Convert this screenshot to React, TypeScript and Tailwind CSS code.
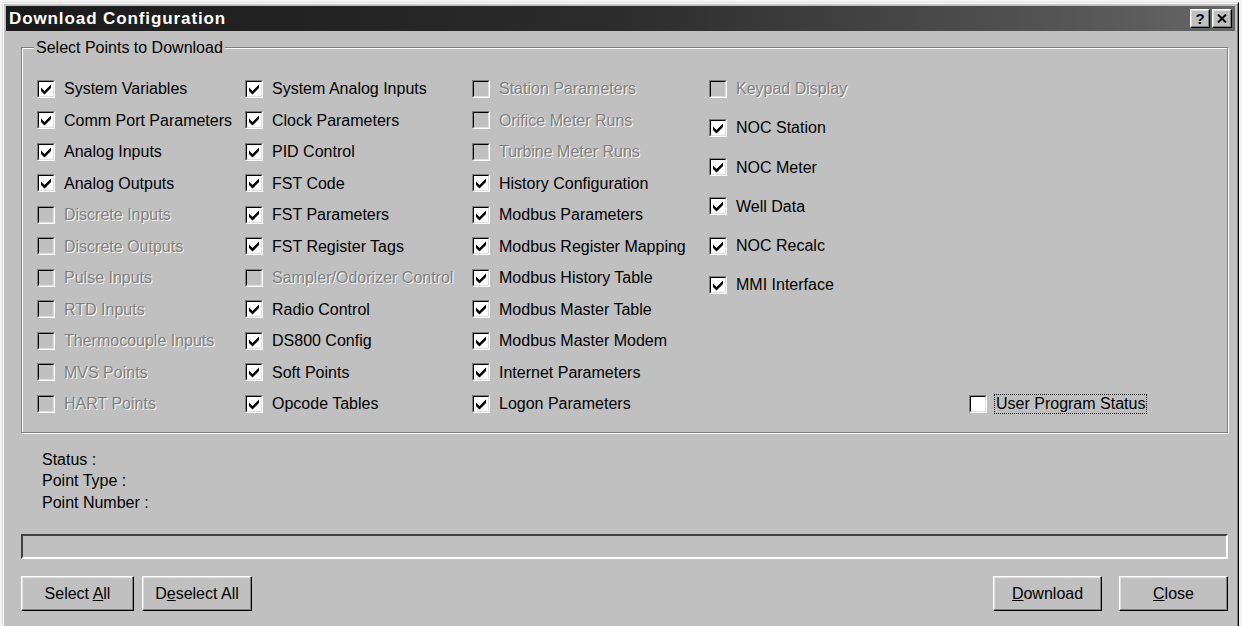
import type { ReactNode } from "react";

type Point = { label: string; checked?: boolean; disabled?: boolean };

const col1: Point[] = [
  { label: "System Variables", checked: true },
  { label: "Comm Port Parameters", checked: true },
  { label: "Analog Inputs", checked: true },
  { label: "Analog Outputs", checked: true },
  { label: "Discrete Inputs", disabled: true },
  { label: "Discrete Outputs", disabled: true },
  { label: "Pulse Inputs", disabled: true },
  { label: "RTD Inputs", disabled: true },
  { label: "Thermocouple Inputs", disabled: true },
  { label: "MVS Points", disabled: true },
  { label: "HART Points", disabled: true },
];

const col2: Point[] = [
  { label: "System Analog Inputs", checked: true },
  { label: "Clock Parameters", checked: true },
  { label: "PID Control", checked: true },
  { label: "FST Code", checked: true },
  { label: "FST Parameters", checked: true },
  { label: "FST Register Tags", checked: true },
  { label: "Sampler/Odorizer Control", disabled: true },
  { label: "Radio Control", checked: true },
  { label: "DS800 Config", checked: true },
  { label: "Soft Points", checked: true },
  { label: "Opcode Tables", checked: true },
];

const col3: Point[] = [
  { label: "Station Parameters", disabled: true },
  { label: "Orifice Meter Runs", disabled: true },
  { label: "Turbine Meter Runs", disabled: true },
  { label: "History Configuration", checked: true },
  { label: "Modbus Parameters", checked: true },
  { label: "Modbus Register Mapping", checked: true },
  { label: "Modbus History Table", checked: true },
  { label: "Modbus Master Table", checked: true },
  { label: "Modbus Master Modem", checked: true },
  { label: "Internet Parameters", checked: true },
  { label: "Logon Parameters", checked: true },
];

const col4: Point[] = [
  { label: "Keypad Display", disabled: true },
  { label: "NOC Station", checked: true },
  { label: "NOC Meter", checked: true },
  { label: "Well Data", checked: true },
  { label: "NOC Recalc", checked: true },
  { label: "MMI Interface", checked: true },
];

// sunken 3d check box
function Box({ checked, disabled }: { checked?: boolean; disabled?: boolean }) {
  return (
    <span className="flex size-[18px] shrink-0 border border-t-[#808080] border-l-[#808080] border-r-white border-b-white">
      <span
        className={`flex flex-1 items-center justify-center border border-t-black border-l-black border-r-[#dfdfdf] border-b-[#dfdfdf] ${
          disabled ? "bg-[#c0c0c0]" : "bg-white"
        }`}
      >
        {checked && (
          <svg width="14" height="14" viewBox="0 0 14 14">
            <polygon points="2,5.5 5.5,9 12,2.5 12,6 5.5,12.5 2,9" fill="#000" />
          </svg>
        )}
      </span>
    </span>
  );
}

function Check({ label, checked, disabled }: Point) {
  return (
    <div className="flex h-[31.5px] items-center gap-[9px] whitespace-nowrap">
      <Box checked={checked} disabled={disabled} />
      <span className={disabled ? "text-[#808080] [text-shadow:1px_1px_0_#fff]" : "text-black"}>{label}</span>
    </div>
  );
}

// raised push button
function Button({ className, children }: { className: string; children: ReactNode }) {
  return (
    <button
      className={`flex h-[35px] items-center justify-center border border-t-white border-l-white border-r-black border-b-black bg-[#c0c0c0] text-black shadow-[inset_-1px_-1px_#808080,inset_1px_1px_#dfdfdf] ${className}`}
    >
      <span>{children}</span>
    </button>
  );
}

function TitleButton({ children }: { children: ReactNode }) {
  return (
    <span className="flex h-[19px] w-[20px] items-center justify-center border border-t-white border-l-white border-r-black border-b-black bg-[#c0c0c0] text-[15px] font-bold leading-none text-black shadow-[inset_-1px_-1px_#808080,inset_1px_1px_#dfdfdf]">
      {children}
    </span>
  );
}

export default function App() {
  return (
    <div className="h-[626px] w-[1242px] overflow-hidden bg-[#f4f4f4] pl-[2px] pt-[2px] font-['Liberation_Sans',Arial,sans-serif] text-[16px] leading-[19px]">
      <div className="h-[640px] w-[1237px] border border-t-[#dfdfdf] border-l-[#dfdfdf] border-r-black border-b-black">
        <div className="h-full border border-t-white border-l-white border-r-[#808080] border-b-[#808080] bg-[#c0c0c0] p-[2px]">
          {/* caption */}
          <div className="flex h-[25px] items-center justify-between bg-gradient-to-r from-[#1a1a1a] via-[#2c2c2c] to-[#666666] pl-[3px] pr-[3px]">
            <span className="text-[17px] font-bold tracking-[0.9px] text-white">Download Configuration</span>
            <div className="flex gap-[2px]">
              <TitleButton>?</TitleButton>
              <TitleButton>
                <svg width="10" height="9" viewBox="0 0 10 9">
                  <path d="M1 0.5 L9 8.5 M9 0.5 L1 8.5" stroke="#000" strokeWidth="2" />
                </svg>
              </TitleButton>
            </div>
          </div>

          <div className="ml-[15px] w-[1207px]">
            {/* group box */}
            <div className="relative mt-[16px] border border-[#808080] pb-[12px] pl-[15px] pt-[25px] shadow-[inset_1px_1px_#fff,1px_1px_#fff]">
              <span className="absolute -top-[10px] left-[12px] bg-[#c0c0c0] px-[2px] text-black">
                Select Points to Download
              </span>
              <div className="grid grid-cols-[208px_227px_237px_1fr]">
                <div className="flex flex-col">
                  {col1.map((p) => (
                    <Check key={p.label} {...p} />
                  ))}
                </div>
                <div className="flex flex-col">
                  {col2.map((p) => (
                    <Check key={p.label} {...p} />
                  ))}
                </div>
                <div className="flex flex-col">
                  {col3.map((p) => (
                    <Check key={p.label} {...p} />
                  ))}
                </div>
                <div className="flex flex-col">
                  <div className="flex flex-col gap-[7.7px]">
                    {col4.map((p) => (
                      <Check key={p.label} {...p} />
                    ))}
                  </div>
                  <div className="mt-auto ml-[260px] flex h-[31.5px] items-center gap-[7px] whitespace-nowrap">
                    <Box />
                    <span className="border border-dotted border-black px-[1px] leading-[18px] text-black">
                      User Program Status
                    </span>
                  </div>
                </div>
              </div>
            </div>

            {/* progress info */}
            <div className="mt-[16px] flex flex-col pl-[21px] leading-[21.5px] text-black">
              <span>Status :</span>
              <span>Point Type :</span>
              <span>Point Number :</span>
            </div>

            <div className="mt-[21px] h-[25px] border-2 border-t-[#404040] border-l-[#404040] border-r-white border-b-white" />

            <div className="mt-[17px] flex justify-between">
              <div className="flex gap-[8px]">
                <Button className="w-[113px]">
                  Select <u>A</u>ll
                </Button>
                <Button className="w-[110px]">
                  D<u>e</u>select All
                </Button>
              </div>
              <div className="flex gap-[17px]">
                <Button className="w-[109px]">
                  <u>D</u>ownload
                </Button>
                <Button className="w-[109px]">
                  <u>C</u>lose
                </Button>
              </div>
            </div>
          </div>
        </div>
      </div>
    </div>
  );
}
